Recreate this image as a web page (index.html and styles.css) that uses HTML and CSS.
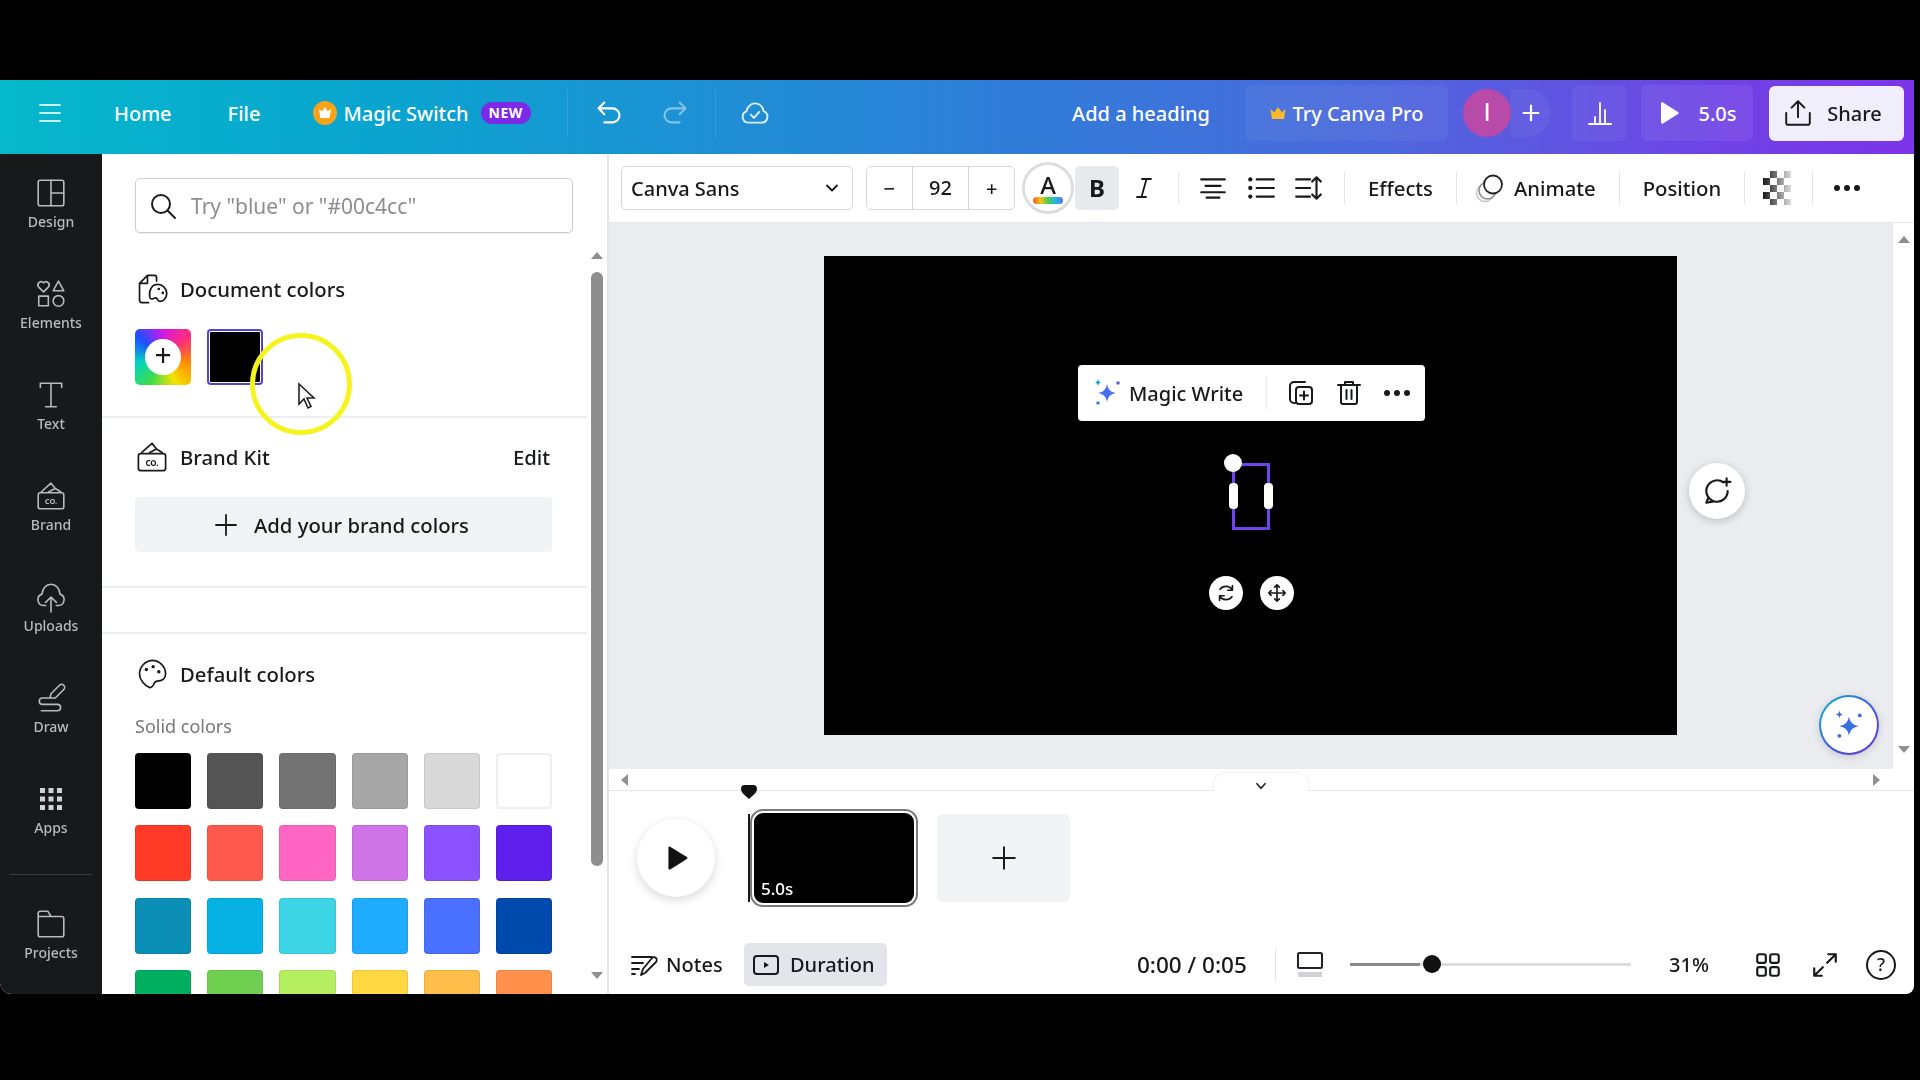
FILE: index.html
```html
<!DOCTYPE html>
<html lang="en">
<head>
    <meta charset="UTF-8">
    <title>Canva editor</title>
    <link rel="stylesheet" href="styles.css">
</head>
<body>
<div class="app">
    <header class="topbar">
        <svg class="icon menu-icon" viewBox="0 0 24 24"><path d="M2 4h20M2 12h20M2 20h20"/></svg>
        <span class="nav-link home-link">Home</span>
        <span class="nav-link file-link">File</span>
        <svg class="magic-crown" viewBox="0 0 24 24"><circle cx="12" cy="12" r="12" fill="#f9a31a"/><path d="M6 8l3.200 2.400L12 6l2.800 4.400L18 8l-1.400 9H7.400z" fill="#fff"/></svg>
        <span class="nav-link magic-link">Magic Switch</span>
        <span class="new-badge">NEW</span>
        <span class="bar-divider first-divider"></span>
        <svg class="icon undo-icon" viewBox="0 0 24 24"><path d="M8 3 3 8l5 5M3 8h12a5.500 5.500 0 0 1 0 12H8"/></svg>
        <svg class="icon redo-icon" viewBox="0 0 24 24"><path d="M16 3l5 5-5 5M21 8H9a5.500 5.500 0 0 0 0 12h7"/></svg>
        <span class="bar-divider second-divider"></span>
        <svg class="icon cloud-icon" viewBox="0 0 28 24"><path d="M8 21a5.500 5.500 0 0 1-2-10.600C7 6 10.500 3 14 3c4 0 7 2.800 8 7.200A5.600 5.600 0 0 1 20.500 21z"/><path d="M10 13.500l3 3 5-5.500"/></svg>

        <div class="top-right">
            <span class="nav-link heading-link">Add a heading</span>
            <div class="pro-button">
                <svg class="pro-crown" viewBox="0 0 24 24"><path d="M2 7l5 4 5-7 5 7 5-4-2 13H4z" fill="#f8b92c"/></svg>
                <span class="nav-link">Try Canva Pro</span>
            </div>
            <div class="avatar">I</div>
            <div class="invite"><svg class="icon" viewBox="0 0 24 24"><path d="M12 4v16M4 12h16"/></svg></div>
            <div class="stats"><svg class="icon" viewBox="0 0 28 28"><path d="M3 25h22M9 25v-7M14 25V4M19 25V11"/></svg></div>
            <div class="present">
                <svg class="present-icon" viewBox="0 0 24 24"><path d="M4 2.500c0-1 1-1.500 2-1l15 9.500c.8.500.8 1.500 0 2L6 22.500c-1 .5-2 0-2-1z" fill="#fff"/></svg>
                <span class="nav-link">5.0s</span>
            </div>
            <div class="share">
                <svg class="icon" viewBox="0 0 28 28"><path d="M14 18V3M8 9l6-6 6 6M3 14v9a2 2 0 0 0 2 2h18a2 2 0 0 0 2-2v-9"/></svg>
                <span>Share</span>
            </div>
        </div>
    </header>

    <div class="main">
        <nav class="sidebar">
            <div class="side-item">
                <svg class="icon" viewBox="0 0 30 30"><rect x="3" y="3" width="24" height="24" rx="2"/><path d="M15 3v24M15 15h12"/></svg>
                <span>Design</span>
            </div>
            <div class="side-item">
                <svg class="icon" viewBox="0 0 30 30"><path d="M8 13 3.500 8.500a3 3 0 0 1 4.500-4 3 3 0 0 1 4.500 4zM22 3l5 9H17z"/><rect x="3.500" y="17" width="9" height="9"/><circle cx="22" cy="21.500" r="5"/></svg>
                <span>Elements</span>
            </div>
            <div class="side-item">
                <svg class="icon" viewBox="0 0 30 30"><path d="M5 8V4h20v4M15 4v22M10 26h10"/></svg>
                <span>Text</span>
            </div>
            <div class="side-item">
                <svg class="icon" viewBox="0 0 30 30"><rect x="3" y="12" width="24" height="15" rx="2"/><path d="M6 11l9-8 4 5M13 11l6-3 5 3"/><text x="15" y="22.500" class="brand-text">CO.</text></svg>
                <span>Brand</span>
            </div>
            <div class="side-item">
                <svg class="icon" viewBox="0 0 30 30"><path d="M10 23H8a5.500 5.500 0 0 1-1.500-10.700C7 7 10.500 3 15 3s8 4 8.500 9.300A5.500 5.500 0 0 1 22 23h-2M15 29V15M10 20l5-5 5 5"/></svg>
                <span>Uploads</span>
            </div>
            <div class="side-item">
                <svg class="icon" viewBox="0 0 30 30"><path d="M14 15H7a3 3 0 0 0 0 6h14a3 3 0 0 1 0 6H6M14 15l1-4 8-8c1-1 3-1 4 0s1 3 0 4l-8 8z"/></svg>
                <span>Draw</span>
            </div>
            <div class="side-item">
                <svg class="apps-icon" viewBox="0 0 24 24"><path d="M1 1h5v5H1zM9.500 1h5v5h-5zM18 1h5v5h-5zM1 9.500h5v5H1zM9.500 9.500h5v5h-5zM18 9.500h5v5h-5zM1 18h5v5H1zM9.500 18h5v5h-5zM18 18h5v5h-5z"/></svg>
                <span>Apps</span>
            </div>
            <div class="side-line"></div>
            <div class="side-item projects-item">
                <svg class="icon" viewBox="0 0 30 30"><path d="M3 8V5a2 2 0 0 1 2-2h7l3 5h10a2 2 0 0 1 2 2v15a2 2 0 0 1-2 2H5a2 2 0 0 1-2-2zM3 8h12"/></svg>
                <span>Projects</span>
            </div>
        </nav>

        <aside class="panel">
            <div class="search">
                <svg class="icon" viewBox="0 0 28 28"><circle cx="12" cy="12" r="9"/><path d="M19 19l7 7"/></svg>
                <span>Try "blue" or "#00c4cc"</span>
            </div>
            <section class="doc-colors">
                <h3 class="panel-title">
                    <svg class="icon" viewBox="0 0 30 30"><path d="M12 27H6a2 2 0 0 1-2-2V10l7-7h6a2 2 0 0 1 2 2v3M11 3v7H4"/><path d="M20 11a8 8 0 0 1 8 8c0 4-3 7-6 7-2 0-2-2-3-3-2-1-5 3-6-1-1-6 2-11 7-11z"/><circle cx="21" cy="15" r="1.200" class="dot"/><circle cx="24.500" cy="18.500" r="1.200" class="dot"/></svg>
                    Document colors
                </h3>
                <div class="doc-swatches">
                    <div class="rainbow"><span>+</span></div>
                    <div class="doc-black"></div>
                </div>
            </section>
            <section class="brand">
                <div class="brand-head">
                    <h3 class="panel-title">
                        <svg class="icon" viewBox="0 0 30 30"><rect x="3" y="12" width="24" height="15" rx="2"/><path d="M6 11l9-8 4 5M13 11l6-3 5 3"/><text x="15" y="22.500" class="brand-text">CO.</text></svg>
                        Brand Kit
                    </h3>
                    <span class="edit-link">Edit</span>
                </div>
                <div class="add-brand">
                    <svg class="icon" viewBox="0 0 24 24"><path d="M12 2v20M2 12h20"/></svg>
                    <span>Add your brand colors</span>
                </div>
            </section>
            <div class="panel-gap"></div>
            <section class="defaults">
                <h3 class="panel-title">
                    <svg class="icon" viewBox="0 0 30 30"><path d="M15 3a12 12 0 0 1 12 12c0 4-3 6-6 6-2 0-3 0-4 2-1 3-2 4-4 4-5-2-9-7-9-12A12 12 0 0 1 15 3z"/><circle cx="10" cy="11" r="1.500" class="dot"/><circle cx="16" cy="8.500" r="1.500" class="dot"/><circle cx="21" cy="13" r="1.500" class="dot"/></svg>
                    Default colors
                </h3>
                <div class="solid-label">Solid colors</div>
                <div class="swatches" id="swatches"></div>
            </section>
            <div class="panel-scroll">
                <span class="arrow-up"></span>
                <span class="panel-thumb"></span>
                <span class="arrow-down"></span>
            </div>
        </aside>

        <div class="editor">
            <div class="toolbar">
                <div class="font-select">
                    <span>Canva Sans</span>
                    <svg class="icon" viewBox="0 0 24 24"><path d="M6 9l6 6 6-6"/></svg>
                </div>
                <div class="size-group">
                    <span class="size-btn">−</span>
                    <span class="size-value">92</span>
                    <span class="size-btn">+</span>
                </div>
                <div class="color-btn">
                    <span class="color-a">A</span>
                    <span class="color-strip"></span>
                </div>
                <div class="bold-btn">B</div>
                <div class="italic-btn"><svg class="icon" viewBox="0 0 24 24"><path d="M10 3h9M5 21h9M14.500 3l-5 18"/></svg></div>
                <span class="tool-divider"></span>
                <svg class="icon tool-icon align-icon" viewBox="0 0 28 24"><path d="M3 4h22M7 10h14M3 16h22M8 21h12"/></svg>
                <svg class="icon tool-icon list-icon" viewBox="0 0 28 24"><path d="M10 4h16M10 12h16M10 20h16"/><circle cx="4" cy="4" r="2" class="dot"/><circle cx="4" cy="12" r="2" class="dot"/><circle cx="4" cy="20" r="2" class="dot"/></svg>
                <svg class="icon tool-icon spacing-icon" viewBox="0 0 28 24"><path d="M2 4h13M2 12h13M2 20h13M21 2v20M17 6l4-4 4 4M17 18l4 4 4-4"/></svg>
                <span class="tool-divider effects-divider"></span>
                <span class="tool-text effects-text">Effects</span>
                <span class="tool-divider"></span>
                <svg class="animate-icon" viewBox="0 0 30 30"><circle cx="10" cy="20" r="8.500" class="ring-light"/><circle cx="12.500" cy="17.500" r="8.500" class="ring-mid"/><circle cx="18" cy="11.500" r="9" class="ring-dark"/></svg>
                <span class="tool-text animate-text">Animate</span>
                <span class="tool-divider"></span>
                <span class="tool-text position-text">Position</span>
                <span class="tool-divider"></span>
                <div class="checker"></div>
                <span class="tool-divider checker-divider"></span>
                <div class="dots tool-dots"><i></i><i></i><i></i></div>
            </div>

            <div class="workspace-row">
                <div class="workspace">
                    <div class="page">
                        <div class="magic-bar">
                            <svg class="sparkle" viewBox="0 0 30 30"><path d="M15 6c1 5 3 8 9 9-6 1-8 4-9 9-1-5-3-8-9-9 6-1 8-4 9-9z" fill="#4a6ef0"/><path d="M6 1c.4 2 1.200 3 3 3.500C7.200 5 6.400 6 6 8c-.4-2-1.200-3-3-3.500C4.800 4 5.600 3 6 1z" fill="#17a3c6"/><circle cx="26" cy="5" r="1.800" fill="#5a5fe8"/><circle cx="6" cy="25" r="1.800" fill="#3a8bd8"/></svg>
                            <span class="magic-text">Magic Write</span>
                            <span class="magic-divider"></span>
                            <svg class="icon magic-icon" viewBox="0 0 28 28"><path d="M9 24H7a4 4 0 0 1-4-4V7a4 4 0 0 1 4-4h11"/><rect x="9" y="8" width="16" height="17" rx="3"/><path d="M17 12.500v8M13 16.500h8"/></svg>
                            <svg class="icon magic-icon" viewBox="0 0 28 28"><path d="M3 6h22M10 6V3h8v3M6 6v17a2 2 0 0 0 2 2h12a2 2 0 0 0 2-2V6M11.500 11v9M16.500 11v9"/></svg>
                            <div class="dots magic-dots"><i></i><i></i><i></i></div>
                        </div>
                        <div class="selection">
                            <span class="sel-dot"></span>
                            <span class="sel-side sel-left"></span>
                            <span class="sel-side sel-right"></span>
                        </div>
                        <div class="round-tool rotate-tool"><svg class="icon" viewBox="0 0 24 24"><path d="M19 4v5h-5M19 9A8 8 0 0 0 5.500 8M5 20v-5h5M5 15a8 8 0 0 0 13.500 1"/></svg></div>
                        <div class="round-tool move-tool"><svg class="icon" viewBox="0 0 24 24"><path d="M12 3v18M3 12h18M9.500 5.500 12 3l2.500 2.500M9.500 18.500 12 21l2.500-2.500M5.500 9.500 3 12l2.500 2.500M18.500 9.500 21 12l-2.500 2.500"/></svg></div>
                    </div>
                    <div class="comment-btn"><svg class="icon" viewBox="0 0 30 30"><path d="M25 15a10 10 0 1 1-4-8M5 26l2-5M5 26l6-1"/><path d="M24 3v7M20.500 6.500h7"/></svg></div>
                    <div class="assistant-btn"><span><svg class="sparkle-big" viewBox="0 0 30 30"><path d="M15 8c1 5 3 7 8 8-5 1-7 3-8 8-1-5-3-7-8-8 5-1 7-3 8-8z" fill="#3a6fe0"/><path d="M7 3c.3 2 1 3 3 3.300C8 6.700 7.300 7.500 7 9.500 6.700 7.500 6 6.700 4 6.300 6 6 6.700 5 7 3z" fill="#3a6fe0"/><circle cx="24" cy="7" r="1.600" fill="#3a6fe0"/><circle cx="7" cy="24" r="1.600" fill="#3a6fe0"/></svg></span></div>
                </div>
                <div class="v-scroll">
                    <span class="arrow-up"></span>
                    <span class="arrow-down"></span>
                </div>
            </div>

            <div class="h-scroll">
                <span class="arrow-left"></span>
                <div class="collapse-tab"><svg class="icon" viewBox="0 0 24 24"><path d="M5 8l7 8 7-8"/></svg></div>
                <span class="arrow-right"></span>
            </div>

            <div class="timeline">
                <svg class="marker" viewBox="0 0 20 18"><path d="M10 17C5 12 1 10 1 5c0-3 2-4 4-4h10c2 0 4 1 4 4 0 5-4 7-9 12z" fill="#111"/></svg>
                <div class="big-play"><svg viewBox="0 0 24 24"><path d="M5 2.500c0-1 .8-1.500 1.600-1L22 11c.8.500.8 1.500 0 2L6.600 22.500c-.8.500-1.600 0-1.600-1z" fill="#111"/></svg></div>
                <div class="playhead"></div>
                <div class="thumb"><span>5.0s</span></div>
                <div class="add-page"><svg class="icon" viewBox="0 0 24 24"><path d="M12 2v20M2 12h20"/></svg></div>
            </div>

            <footer class="bottombar">
                <div class="notes">
                    <svg class="icon" viewBox="0 0 28 24"><path d="M2 4h20M2 10h11M2 16h7M2 21h3M11 22l2-6L22 5c1-1 3-1 4 0s1 3 0 4L15 20z"/></svg>
                    <span>Notes</span>
                </div>
                <div class="duration">
                    <svg class="icon" viewBox="0 0 28 24"><rect x="2" y="3" width="24" height="18" rx="3"/><path d="M12 9l5 3-5 3z" class="dot"/></svg>
                    <span>Duration</span>
                </div>
                <span class="time">0:00 / 0:05</span>
                <span class="tool-divider time-divider"></span>
                <svg class="page-view" viewBox="0 0 28 26"><rect x="2" y="1" width="24" height="15" rx="1.500" class="view-top"/><path d="M2 20h24v5H2z" class="view-bottom"/></svg>
                <div class="slider"><span class="slider-fill"></span><span class="slider-knob"></span></div>
                <span class="zoom-value">31%</span>
                <svg class="icon grid-icon" viewBox="0 0 26 26"><rect x="3" y="3" width="8" height="8" rx="2"/><rect x="15" y="3" width="8" height="8" rx="2"/><rect x="3" y="15" width="8" height="8" rx="2"/><rect x="15" y="15" width="8" height="8" rx="2"/></svg>
                <svg class="icon expand-icon" viewBox="0 0 26 26"><path d="M15 11l8-8M16 3h7v7M11 15l-8 8M3 16v7h7"/></svg>
                <div class="help">?</div>
            </footer>
        </div>
    </div>

    <div class="cursor-ring"></div>
    <svg class="cursor" viewBox="0 0 20 28"><path d="M2 2v20l5-5 4 9 3-1.500-4-8.500h7z" fill="#fff" stroke="#222" stroke-width="1.600"/></svg>
</div>

<script>
    // solid colour grid, last row gets cut off by the panel
    const colors = [
        '#000000', '#545454', '#737373', '#a6a6a6', '#d9d9d9', '#ffffff',
        '#ff3a26', '#ff5a4d', '#ff66c4', '#cf74e6', '#8c52ff', '#5e1fec',
        '#0b8fb6', '#06b2e3', '#3dd5e6', '#1fabff', '#4a70ff', '#004aad',
        '#00ae5f', '#70cf50', '#b5ef5f', '#ffd740', '#ffbd4a', '#ff914d'
    ];
    const swatches = document.getElementById('swatches');

    colors.forEach(function (color) {
        const swatch = document.createElement('div');
        swatch.className = color === '#ffffff' ? 'swatch swatch-white' : 'swatch';
        swatch.style.backgroundColor = color;
        swatches.appendChild(swatch);
    });
</script>
</body>
</html>
```
FILE: styles.css
```css
* {
    box-sizing: border-box;
}

body {
    margin: 0;
    height: 1080px;
    overflow: hidden;
    background-color: #000;
    font-family: "Noto Sans", Arial, sans-serif;
    color: #17191c;
}

h3 {
    margin: 0;
}

.app {
    position: relative;
    width: 1914px;
    height: 914px;
    margin-top: 80px;
    display: flex;
    flex-direction: column;
    background-color: #fff;
    border-radius: 0 0 8px 12px;
    overflow: hidden;
    /* the reference is a soft video frame */
    filter: blur(0.4px);
}

.icon {
    fill: none;
    stroke: currentColor;
    stroke-width: 1.8;
    stroke-linecap: round;
    stroke-linejoin: round;
    flex-shrink: 0;
}

.icon .dot {
    fill: currentColor;
    stroke: none;
}

/* top bar */
.topbar {
    height: 74px;
    flex-shrink: 0;
    display: flex;
    align-items: center;
    padding: 0 10px 8px 0;
    color: #fff;
    background: linear-gradient(90deg, #05b8cb 0%, #0aa4cf 20%, #2c80d8 50%, #4c68dd 72%, #7042e6 90%, #7d34ea 100%);
}

.nav-link {
    font-size: 20px;
    font-weight: 500;
    white-space: nowrap;
}

.menu-icon {
    width: 24px;
    height: 24px;
    margin-left: 38px;
    color: #c8f6f6;
}

.home-link {
    margin-left: 52px;
}

.file-link {
    margin-left: 56px;
}

.magic-crown {
    width: 24px;
    height: 24px;
    margin-left: 53px;
}

.magic-link {
    margin-left: 6px;
}

.new-badge {
    margin-left: 12px;
    width: 50px;
    height: 22px;
    line-height: 22px;
    text-align: center;
    font-size: 14px;
    font-weight: 700;
    letter-spacing: 0.5px;
    background-color: #7d2ae8;
    border-radius: 11px;
}

.bar-divider {
    width: 1px;
    height: 48px;
    background-color: rgba(255, 255, 255, 0.12);
}

.first-divider {
    margin-left: 36px;
}

.undo-icon {
    width: 28px;
    height: 28px;
    margin-left: 27px;
}

.redo-icon {
    width: 28px;
    height: 28px;
    margin-left: 38px;
    opacity: 0.45;
}

.second-divider {
    margin-left: 26px;
}

.cloud-icon {
    width: 30px;
    height: 28px;
    margin-left: 24px;
    opacity: 0.85;
}

.top-right {
    margin-left: auto;
    display: flex;
    align-items: center;
}

.heading-link {
    margin-right: 36px;
}

.pro-button {
    width: 202px;
    height: 56px;
    padding-right: 2px;
    display: flex;
    align-items: center;
    justify-content: center;
    gap: 6px;
    border-radius: 6px;
    background-color: rgba(255, 255, 255, 0.05);
}

.pro-crown {
    width: 18px;
    height: 18px;
}

.avatar {
    width: 48px;
    height: 48px;
    margin-left: 15px;
    border-radius: 50%;
    background-color: #b84aa9;
    text-align: center;
    line-height: 46px;
    font-family: "Liberation Sans", Arial, sans-serif;
    font-size: 26px;
}

.invite {
    width: 40px;
    height: 48px;
    margin-right: 21px;
    display: flex;
    align-items: center;
    justify-content: center;
    background-color: rgba(255, 255, 255, 0.05);
    border-radius: 0 24px 24px 0;
}

.invite .icon {
    width: 22px;
    height: 22px;
    stroke-width: 2.4;
}

.stats {
    width: 55px;
    height: 56px;
    margin-right: 14px;
    display: flex;
    align-items: center;
    justify-content: center;
    background-color: rgba(255, 255, 255, 0.05);
    border-radius: 6px;
}

.stats .icon {
    width: 28px;
    height: 28px;
}

.present {
    width: 112px;
    height: 56px;
    margin-right: 16px;
    display: flex;
    align-items: center;
    justify-content: center;
    gap: 17px;
    background-color: rgba(255, 255, 255, 0.07);
    border-radius: 6px;
}

.present-icon {
    width: 24px;
    height: 24px;
}

.share {
    width: 135px;
    height: 55px;
    padding-right: 8px;
    display: flex;
    align-items: center;
    justify-content: center;
    gap: 14px;
    color: #17191c;
    background-color: #f1eefb;
    border-radius: 6px;
    font-size: 20px;
    font-weight: 500;
}

.share .icon {
    width: 30px;
    height: 30px;
}

.main {
    flex: 1;
    display: flex;
    min-height: 0;
}

/* left rail */
.sidebar {
    width: 102px;
    flex-shrink: 0;
    background-color: #18191b;
    color: #b9babc;
    display: flex;
    flex-direction: column;
}

.side-item {
    height: 101px;
    flex-shrink: 0;
    display: flex;
    flex-direction: column;
    align-items: center;
    padding-top: 23px;
    font-size: 14px;
    font-weight: 500;
    gap: 3px;
}

.side-item .icon {
    width: 32px;
    height: 32px;
    stroke-width: 1.5;
}

.brand-text {
    font-size: 7px;
    font-weight: 700;
    text-anchor: middle;
    fill: currentColor;
    stroke: none;
}

.apps-icon {
    width: 24px;
    height: 24px;
    margin: 4px 0;
    fill: #d2d2d4;
}

.side-line {
    width: 82px;
    height: 1px;
    margin: 13px auto 0;
    background-color: #3a3b3e;
    flex-shrink: 0;
}

.projects-item {
    padding-top: 33px;
}

/* colour panel */
.panel {
    position: relative;
    width: 507px;
    flex-shrink: 0;
    background-color: #fff;
    border-right: 2px solid #e4e5e8;
    overflow: hidden;
}

.search {
    width: 438px;
    height: 55px;
    margin: 24px 0 0 33px;
    padding: 0 13px;
    display: flex;
    align-items: center;
    gap: 14px;
    border: 1px solid #c9ccd1;
    border-radius: 5px;
    box-shadow: 0 1px 1px rgba(0, 0, 0, 0.08);
    font-size: 21px;
    color: #8a8d91;
}

.search .icon {
    width: 28px;
    height: 28px;
    color: #1c1d20;
    stroke-width: 2;
}

.panel-title {
    display: flex;
    align-items: center;
    gap: 11px;
    font-size: 20.3px;
    font-weight: 500;
}

.panel-title .icon {
    width: 34px;
    height: 34px;
    margin-left: 0;
    stroke-width: 1.500;
}

.doc-colors {
    height: 146px;
    margin-top: 39px;
    padding-left: 33px;
    border-bottom: 2px solid #eceef0;
}

.doc-swatches {
    display: flex;
    gap: 16px;
    margin-top: 23px;
}

.rainbow {
    width: 56px;
    height: 56px;
    border-radius: 5px;
    display: flex;
    align-items: center;
    justify-content: center;
    background: conic-gradient(#d318e8, #ff2e7c, #ff8a00, #f4e300, #3fdc4a, #00d4c0, #1d4fff, #d318e8);
}

.rainbow span {
    width: 36px;
    height: 36px;
    border-radius: 50%;
    background-color: #fff;
    text-align: center;
    line-height: 32px;
    font-size: 30px;
}

.doc-black {
    width: 56px;
    height: 56px;
    background-color: #000;
    border: 3px solid #fff;
    outline: 2.5px solid #5a3fd0;
    outline-offset: -2px;
    border-radius: 4px;
}

.brand {
    height: 170px;
    padding: 22px 0 0 33px;
    border-bottom: 2px solid #eceef0;
}

.brand-head {
    display: flex;
    justify-content: space-between;
    align-items: center;
    width: 417px;
}

.edit-link {
    font-size: 20.3px;
    font-weight: 500;
    margin-right: 2px;
}

.add-brand {
    width: 417px;
    height: 55px;
    margin-top: 23px;
    padding-right: 4px;
    display: flex;
    align-items: center;
    justify-content: center;
    gap: 16px;
    background-color: #f2f3f5;
    border-radius: 4px;
    font-size: 20.3px;
    font-weight: 500;
}

.add-brand .icon {
    width: 24px;
    height: 24px;
}

.panel-gap {
    height: 46px;
    border-bottom: 2px solid #eceef0;
}

.defaults {
    padding: 23px 0 0 33px;
}

.solid-label {
    margin-top: 23px;
    font-size: 18px;
    color: #777;
}

.swatches {
    width: 417px;
    margin-top: 15px;
    display: grid;
    grid-template-columns: repeat(6, 1fr);
    gap: 16.3px 16px;
}

.swatch {
    height: 56px;
    border-radius: 4px;
    box-shadow: inset 0 0 0 1px rgba(0, 0, 0, 0.08);
}

.swatch-white {
    box-shadow: inset 0 0 0 2px #eceef0;
}

.panel-scroll {
    position: absolute;
    top: 98px;
    right: 0;
    bottom: 15px;
    width: 20px;
    padding: 0 4px 0 3px;
    display: flex;
    flex-direction: column;
    align-items: center;
    background-color: #fff;
}

.panel-thumb {
    width: 12px;
    height: 594px;
    margin-top: 13px;
    background-color: #8e8e8e;
    border-radius: 6px;
}

.panel-scroll .arrow-down {
    margin-top: auto;
}

.arrow-up {
    width: 0;
    height: 0;
    border: 6px solid transparent;
    border-top: 0;
    border-bottom: 7px solid #8f8f8f;
}

.arrow-down {
    width: 0;
    height: 0;
    border: 6px solid transparent;
    border-bottom: 0;
    border-top: 7px solid #8f8f8f;
}

/* editor column */
.editor {
    flex: 1;
    min-width: 0;
    display: flex;
    flex-direction: column;
}

.toolbar {
    height: 69px;
    flex-shrink: 0;
    display: flex;
    align-items: center;
    padding-left: 12px;
    border-bottom: 1px solid #e6e7ea;
}

.font-select {
    width: 232px;
    height: 44px;
    padding: 0 10px;
    display: flex;
    align-items: center;
    justify-content: space-between;
    border: 1px solid #d5d7db;
    border-radius: 5px;
    font-size: 20px;
    font-weight: 500;
}

.font-select span {
    margin-left: -1px;
}

.font-select .icon {
    width: 20px;
    height: 20px;
    stroke-width: 2.2;
}

.size-group {
    width: 149px;
    height: 44px;
    margin-left: 13px;
    display: flex;
    align-items: center;
    border: 1px solid #d5d7db;
    border-radius: 5px;
    font-size: 20px;
    font-weight: 500;
    text-align: center;
}

.size-btn {
    width: 45px;
}

.size-value {
    width: 58px;
    line-height: 42px;
    border-left: 1px solid #d5d7db;
    border-right: 1px solid #d5d7db;
}

.color-btn {
    width: 52px;
    height: 52px;
    margin-left: 7px;
    display: flex;
    flex-direction: column;
    align-items: center;
    justify-content: center;
    border: 3px solid #dcdde0;
    border-radius: 50%;
}

.color-a {
    font-size: 24px;
    font-weight: 500;
    line-height: 24px;
}

.color-strip {
    width: 30px;
    height: 7px;
    border-radius: 4px;
    background: linear-gradient(90deg, #f25a2a, #f5c518, #4ccf4a, #23b8e0, #5b6be8);
}

.bold-btn {
    width: 44px;
    height: 44px;
    margin-left: 1px;
    text-align: center;
    line-height: 44px;
    font-size: 24px;
    font-weight: 700;
    background-color: #e8e9ec;
    border-radius: 5px;
}

.italic-btn {
    width: 44px;
    height: 44px;
    margin-left: 3px;
    display: flex;
    align-items: center;
    justify-content: center;
}

.italic-btn .icon {
    width: 24px;
    height: 24px;
}

.tool-divider {
    width: 1px;
    height: 32px;
    margin-left: 12px;
    background-color: #e3e4e7;
    flex-shrink: 0;
}

.tool-icon {
    width: 30px;
    height: 26px;
    stroke-width: 2;
}

.align-icon {
    margin-left: 19px;
}

.list-icon {
    margin-left: 18px;
}

.spacing-icon {
    margin-left: 18px;
}

.effects-divider {
    margin-left: 20px;
}

.tool-text {
    font-size: 20.3px;
    font-weight: 500;
    margin-left: 23px;
}

.tool-text + .tool-divider {
    margin-left: 23px;
}

.animate-icon {
    width: 30px;
    height: 30px;
    margin-left: 18px;
    fill: #fff;
}

.ring-light {
    stroke: #c8c8c8;
    stroke-width: 1.500;
}

.ring-mid {
    stroke: #8a8a8a;
    stroke-width: 1.500;
}

.ring-dark {
    stroke: #222;
    stroke-width: 1.800;
}

.tool-text.animate-text {
    margin-left: 9px;
}

.checker {
    width: 28px;
    height: 34px;
    margin-left: 18px;
    background:
        conic-gradient(#1a1a1a 25%, transparent 0 50%, #1a1a1a 0 75%, transparent 0) 0 0 / 14px 14px;
    -webkit-mask-image: linear-gradient(90deg, #000, rgba(0, 0, 0, 0.15));
    mask-image: linear-gradient(90deg, #000, rgba(0, 0, 0, 0.15));
}

.checker-divider {
    margin-left: 21px;
}

.dots {
    display: flex;
    gap: 4px;
}

.dots i {
    width: 6px;
    height: 6px;
    background-color: #17191c;
    border-radius: 50%;
}

.tool-dots {
    margin-left: 21px;
}

.workspace-row {
    height: 546px;
    flex-shrink: 0;
    display: flex;
}

.workspace {
    position: relative;
    flex: 1;
    background-color: #ebecf0;
}

.page {
    position: relative;
    width: 853px;
    height: 479px;
    margin: 33px 0 0 215px;
    background-color: #000;
}

.magic-bar {
    position: absolute;
    left: 254px;
    top: 109px;
    width: 347px;
    height: 56px;
    padding-left: 14px;
    display: flex;
    align-items: center;
    background-color: #fff;
    border-radius: 4px;
}

.sparkle {
    width: 30px;
    height: 30px;
}

.magic-text {
    margin-left: 7px;
    font-size: 20px;
    font-weight: 500;
    width: 113px;
    white-space: nowrap;
}

.magic-divider {
    width: 1px;
    height: 32px;
    margin-left: 24px;
    background-color: #e9eaec;
}

.magic-icon {
    width: 28px;
    height: 28px;
    margin-left: 20px;
    stroke-width: 2;
}

.magic-dots {
    margin-left: 21px;
}

.selection {
    position: absolute;
    left: 408px;
    top: 207px;
    width: 38px;
    height: 67px;
    border: 3px solid #6f45ea;
}

.sel-dot {
    position: absolute;
    left: -11px;
    top: -12px;
    width: 18px;
    height: 18px;
    background-color: #fff;
    border-radius: 50%;
}

.sel-side {
    position: absolute;
    top: 17px;
    width: 9px;
    height: 26px;
    background-color: #fff;
    border-radius: 4px;
}

.sel-left {
    left: -6px;
}

.sel-right {
    right: -6px;
}

.round-tool {
    position: absolute;
    top: 320px;
    width: 34px;
    height: 34px;
    display: flex;
    align-items: center;
    justify-content: center;
    background-color: #fff;
    border-radius: 50%;
}

.round-tool .icon {
    width: 22px;
    height: 22px;
}

.rotate-tool {
    left: 385px;
}

.move-tool {
    left: 436px;
}

.comment-btn {
    position: absolute;
    left: 1080px;
    top: 240px;
    width: 56px;
    height: 56px;
    display: flex;
    align-items: center;
    justify-content: center;
    background-color: #fff;
    border-radius: 50%;
    box-shadow: 0 2px 8px rgba(0, 0, 0, 0.2);
}

.comment-btn .icon {
    width: 32px;
    height: 32px;
    stroke-width: 2;
}

.assistant-btn {
    position: absolute;
    left: 1210px;
    top: 472px;
    width: 60px;
    height: 60px;
    padding: 2px;
    border-radius: 50%;
    background: linear-gradient(135deg, #12b5c9, #3a60d8, #6a2fd8);
    box-shadow: 0 2px 8px rgba(0, 0, 0, 0.15);
}

.assistant-btn span {
    width: 100%;
    height: 100%;
    display: flex;
    align-items: center;
    justify-content: center;
    background-color: #fff;
    border-radius: 50%;
}

.sparkle-big {
    width: 36px;
    height: 36px;
}

.v-scroll {
    width: 21px;
    padding: 13px 0 16px;
    display: flex;
    flex-direction: column;
    align-items: center;
    justify-content: space-between;
    background-color: #fff;
}

.h-scroll {
    position: relative;
    height: 22px;
    flex-shrink: 0;
    display: flex;
    align-items: center;
    justify-content: space-between;
    padding: 0 34px 0 12px;
    border-bottom: 1px solid #e6e7ea;
}

.arrow-left {
    width: 0;
    height: 0;
    border: 6px solid transparent;
    border-left: 0;
    border-right: 7px solid #8f8f8f;
}

.arrow-right {
    width: 0;
    height: 0;
    border: 6px solid transparent;
    border-right: 0;
    border-left: 7px solid #8f8f8f;
}

.collapse-tab {
    position: absolute;
    left: 604px;
    top: 3px;
    width: 96px;
    height: 20px;
    display: flex;
    justify-content: center;
    background-color: #fff;
    border: 1px solid #f0f1f3;
    border-bottom: 0;
    border-radius: 12px 12px 0 0;
}

.collapse-tab .icon {
    width: 14px;
    height: 14px;
    margin-top: 6px;
    stroke-width: 2.6;
}

.timeline {
    position: relative;
    height: 134px;
    flex-shrink: 0;
    display: flex;
    align-items: center;
    padding-left: 28px;
}

.marker {
    position: absolute;
    left: 131px;
    top: -7px;
    width: 18px;
    height: 16px;
}

.big-play {
    width: 78px;
    height: 78px;
    display: flex;
    align-items: center;
    justify-content: center;
    border-radius: 50%;
    background-color: #fff;
    box-shadow: 0 3px 10px rgba(0, 0, 0, 0.16);
}

.big-play svg {
    width: 26px;
    height: 26px;
}

.playhead {
    width: 2px;
    height: 88px;
    margin-left: 33px;
    background-color: #17191c;
}

.thumb {
    position: relative;
    width: 166px;
    height: 96px;
    margin-left: 1px;
    background-color: #000;
    border: 3px solid #fff;
    outline: 2px solid #7a7a7a;
    outline-offset: -1px;
    border-radius: 12px;
    color: #fff;
    font-size: 17px;
    font-weight: 500;
}

.thumb span {
    position: absolute;
    left: 7px;
    bottom: 3px;
}

.add-page {
    width: 133px;
    height: 88px;
    margin-left: 20px;
    display: flex;
    align-items: center;
    justify-content: center;
    background-color: #f2f3f5;
    border-radius: 6px;
}

.add-page .icon {
    width: 26px;
    height: 26px;
}

.bottombar {
    flex: 1;
    display: flex;
    align-items: center;
    padding: 10px 0 0 21px;
    font-size: 20px;
    font-weight: 500;
}

.notes {
    width: 114px;
    display: flex;
    align-items: center;
    gap: 8px;
}

.notes .icon {
    width: 28px;
    height: 24px;
    stroke-width: 1.800;
}

.duration {
    width: 143px;
    height: 43px;
    padding-left: 8px;
    display: flex;
    align-items: center;
    gap: 10px;
    background-color: #e3e5ea;
    border-radius: 5px;
}

.duration .icon {
    width: 28px;
    height: 24px;
    stroke-width: 2;
}

.time {
    margin-left: 250px;
    width: 110px;
    font-size: 22.5px;
    white-space: nowrap;
}

.time-divider {
    margin-left: 28px;
}

.page-view {
    width: 28px;
    height: 26px;
    margin-left: 20px;
}

.view-top {
    fill: none;
    stroke: #222;
    stroke-width: 2;
}

.view-bottom {
    fill: #d0d1d4;
}

.slider {
    position: relative;
    width: 281px;
    height: 3px;
    margin-left: 26px;
    background-color: #dcdde0;
}

.slider-fill {
    position: absolute;
    left: 0;
    top: 0;
    bottom: 0;
    width: 70px;
    background-color: #8a8a8a;
}

.slider-knob {
    position: absolute;
    left: 73px;
    top: -8px;
    width: 18px;
    height: 18px;
    background-color: #111;
    border-radius: 50%;
}

.zoom-value {
    margin-left: 38px;
    width: 40px;
}

.grid-icon {
    width: 28px;
    height: 28px;
    margin-left: 45px;
    stroke-width: 2;
}

.expand-icon {
    width: 28px;
    height: 28px;
    margin-left: 29px;
    stroke-width: 2;
}

.help {
    width: 30px;
    height: 30px;
    margin-left: 27px;
    border: 2px solid #17191c;
    border-radius: 50%;
    text-align: center;
    line-height: 25px;
    font-size: 18px;
}

/* recording overlay: the highlighted mouse pointer */
.cursor-ring {
    position: absolute;
    left: 250px;
    top: 253px;
    width: 102px;
    height: 102px;
    border: 5px solid #f5f41f;
    border-radius: 50%;
}

.cursor {
    position: absolute;
    left: 297px;
    top: 302px;
    width: 20px;
    height: 28px;
}
```
